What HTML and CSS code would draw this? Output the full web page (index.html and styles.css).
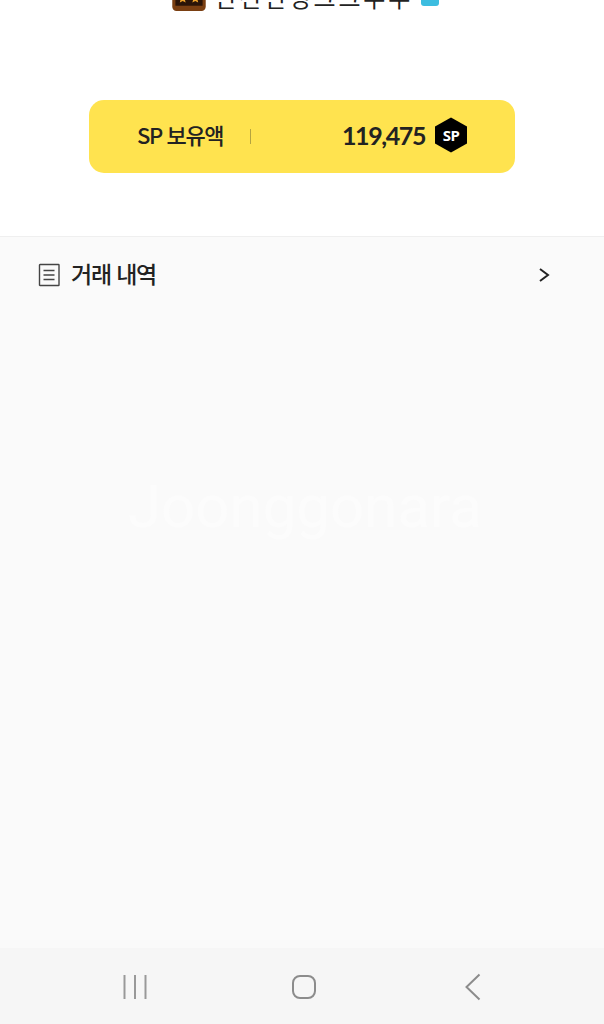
FILE: index.html
```html
<!DOCTYPE html>
<html lang="ko">
<head>
  <meta charset="UTF-8">
  <meta name="viewport" content="width=device-width, initial-scale=1.0">
  <title>SP 거래 내역</title>
  <link rel="stylesheet" href="styles.css">
</head>
<body>
  <div class="page">
    <section class="top">
      <div class="game-title">
        <svg class="game-icon" width="36" height="23" viewBox="0 0 34 22">
          <rect x="1" y="0" width="32" height="21" rx="4" fill="#7a3f12"/>
          <rect x="4" y="0" width="26" height="16" fill="#2a1408"/>
          <path d="M11 4l1.500 3.500 3 .5-2.500 2 .8 3-2.800-1.600-2.800 1.600.8-3-2.500-2 3-.5zM23 4l1.500 3.500 3 .5-2.500 2 .8 3-2.800-1.600-2.800 1.600.8-3-2.500-2 3-.5z" fill="#f0a52c"/>
        </svg>
        <span class="game-name">던전던영그그두두</span>
        <span class="game-badge"></span>
      </div>

      <div class="balance">
        <span class="balance-label">SP 보유액</span>
        <span class="balance-sep"></span>
        <span class="balance-value">119,475</span>
        <span class="sp-coin">
          <svg width="34" height="36" viewBox="0 0 34 36">
            <path d="M17 0.500L33 9.500V26.500L17 35.500L1 26.500V9.500Z" fill="#000"/>
          </svg>
          <span class="sp-coin-text">SP</span>
        </span>
      </div>
    </section>

    <section class="history">
      <a class="history-row">
        <svg class="history-icon" width="22" height="24" viewBox="0 0 22 24" fill="none" stroke="#444" stroke-width="1.400">
          <rect x="1.500" y="1.500" width="19.500" height="21" rx="0.500"/>
          <path d="M5.500 7.500H16.500M5.500 12H16.500M5.500 16.500H16.500"/>
        </svg>
        <span class="history-label">거래 내역</span>
        <svg class="history-arrow" width="14" height="16" viewBox="0 0 14 16" fill="none" stroke="#222" stroke-width="2">
          <path d="M2 2L10 8L2 14"/>
        </svg>
      </a>
      <div class="watermark">Joonggonara</div>
    </section>

    <nav class="nav-bar">
      <svg width="26" height="26" viewBox="0 0 26 26" fill="none" stroke="#999" stroke-width="2">
        <path d="M2.500 1V25M13 1V25M23.500 1V25"/>
      </svg>
      <svg class="nav-home" width="26" height="26" viewBox="0 0 26 26" fill="none" stroke="#8c8c8c" stroke-width="2">
        <rect x="2" y="2" width="22" height="22" rx="7"/>
      </svg>
      <svg class="nav-back" width="18" height="28" viewBox="0 0 18 28" fill="none" stroke="#8c8c8c" stroke-width="2">
        <path d="M15.500 1.500L2.500 14L15.500 26.500"/>
      </svg>
    </nav>
  </div>
</body>
</html>
```

FILE: styles.css
```css
html, body {
  margin: 0;
  padding: 0;
}

body {
  background-color: #fff;
  color: #222;
  font-family: "Noto Sans CJK KR", "Noto Sans", sans-serif;
}

.page {
  display: flex;
  flex-direction: column;
  height: 1024px;
  overflow: hidden;
}

/* Top part, white */
.top {
  height: 236px;
  background-color: #fff;
  border-bottom: 1px solid #efefef;
  display: flex;
  flex-direction: column;
  align-items: center;
  flex-shrink: 0;
}

.game-title {
  height: 12px;
  width: 100%;
  padding-left: 171px;
  box-sizing: border-box;
  display: flex;
  align-items: flex-end;
  overflow: hidden;
  flex-shrink: 0;
}

.game-icon {
  flex-shrink: 0;
}

.game-name {
  margin-left: 7px;
  margin-bottom: 3px;
  font-size: 24px;
  line-height: 24px;
  white-space: nowrap;
  color: #222;
  width: 200px;
  letter-spacing: 2.800px;
  flex-shrink: 0;
}

.game-badge {
  width: 18px;
  height: 6px;
  margin-left: 7px;
  margin-bottom: 6px;
  background-color: #3cbde0;
  border-radius: 0 0 3px 3px;
  flex-shrink: 0;
}

.balance {
  margin-top: 88px;
  width: 426px;
  height: 73px;
  box-sizing: border-box;
  padding: 0 47px 0 48px;
  background-color: #ffe34f;
  border-radius: 15px;
  display: flex;
  align-items: center;
}

.balance-label {
  font-size: 22px;
  font-weight: 500;
  line-height: 28px;
  margin-top: -5px;
  letter-spacing: -1.400px;
  color: #222;
  width: 113px;
  flex-shrink: 0;
  white-space: nowrap;
}

.balance-sep {
  width: 1px;
  height: 15px;
  background-color: #b5a440;
}

.balance-value {
  margin-left: auto;
  margin-top: -3px;
  font-family: Lato, sans-serif;
  font-weight: 700;
  font-size: 25px;
  letter-spacing: -1.400px;
  color: #222;
}

.sp-coin {
  margin-left: 9px;
  margin-top: -3px;
  width: 34px;
  height: 36px;
  position: relative;
  display: flex;
}

.sp-coin-text {
  position: absolute;
  inset: 0;
  display: flex;
  align-items: center;
  justify-content: center;
  color: #fff;
  font-family: "Noto Sans", sans-serif;
  font-weight: 700;
  font-size: 15px;
  letter-spacing: -0.500px;
}

/* Lower part, grey */
.history {
  flex: 1;
  background-color: #fafafa;
  position: relative;
}

.history-row {
  display: flex;
  align-items: center;
  height: 76px;
  padding: 0 52px 0 38px;
}

.history-label {
  margin-left: 11px;
  margin-top: -4px;
  font-size: 23px;
  line-height: 30px;
  font-weight: 500;
  letter-spacing: -1.200px;
  color: #222;
}

.history-arrow {
  margin-left: auto;
}

.watermark {
  position: absolute;
  left: 128px;
  top: 234px;
  font-family: Roboto, sans-serif;
  font-size: 60px;
  line-height: 72px;
  color: #fcfcfc;
  white-space: nowrap;
}

.nav-bar {
  height: 76px;
  box-sizing: border-box;
  padding: 2px 0 0 122px;
  background-color: #f6f6f6;
  display: flex;
  align-items: center;
  flex-shrink: 0;
}

.nav-home {
  margin-left: 143px;
}

.nav-back {
  margin-left: 147px;
}
```
